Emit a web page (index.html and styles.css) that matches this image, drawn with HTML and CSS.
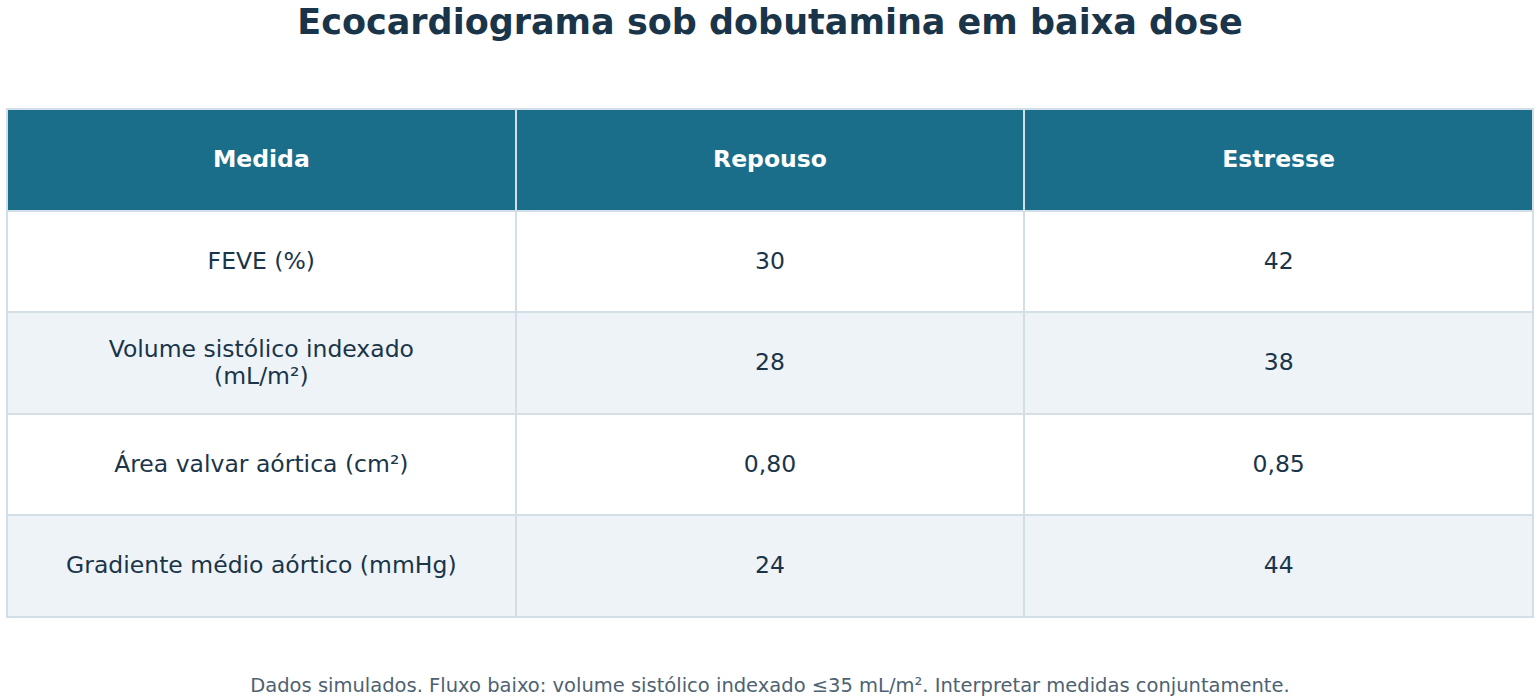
FILE: index.html
```html
<!DOCTYPE html>
<html lang="pt">
<head>
<meta charset="utf-8">
<link rel="stylesheet" href="styles.css">
</head>
<body>
<div class="page">
  <h1 class="title">Ecocardiograma sob dobutamina em baixa dose</h1>
  <table class="data">
    <thead>
      <tr><th>Medida</th><th>Repouso</th><th>Estresse</th></tr>
    </thead>
    <tbody>
      <tr><td>FEVE (%)</td><td>30</td><td>42</td></tr>
      <tr class="alt"><td>Volume sistólico indexado<br>(mL/m²)</td><td>28</td><td>38</td></tr>
      <tr><td>Área valvar aórtica (cm²)</td><td>0,80</td><td>0,85</td></tr>
      <tr class="alt"><td>Gradiente médio aórtico (mmHg)</td><td>24</td><td>44</td></tr>
    </tbody>
  </table>
  <p class="note">Dados simulados. Fluxo baixo: volume sistólico indexado ≤35 mL/m². Interpretar medidas conjuntamente.</p>
</div>
</body>
</html>
```
FILE: styles.css
```css
html, body {
  margin: 0;
  padding: 0;
  background: #ffffff;
}
.page {
  width: 1540px;
  height: 700px;
  padding: 0 6px;
  box-sizing: border-box;
  font-family: "DejaVu Sans", sans-serif;
  color: #1a3549;
  display: flex;
  flex-direction: column;
  overflow: hidden;
}
.title {
  margin: 0;
  height: 44px;
  line-height: 44px;
  font-size: 35px;
  font-weight: bold;
  text-align: center;
  color: #1a3549;
}
.data {
  margin-top: 64px;
  width: 1528px;
  border-collapse: collapse;
  table-layout: fixed;
}
.data th, .data td {
  border: 2px solid #d3dfe7;
  text-align: center;
  vertical-align: middle;
  height: 99.5px;
  padding: 0 8px;
  font-size: 23.5px;
  line-height: 27px;
}
.data th {
  background: #1a6e8a;
  color: #ffffff;
  font-weight: bold;
}
.data td {
  background: #ffffff;
  color: #1a3549;
}
.data tr.alt td {
  background: #eef3f8;
}
.note {
  margin: 56px 0 0;
  text-align: center;
  font-size: 19.5px;
  color: #4d6272;
}
```
